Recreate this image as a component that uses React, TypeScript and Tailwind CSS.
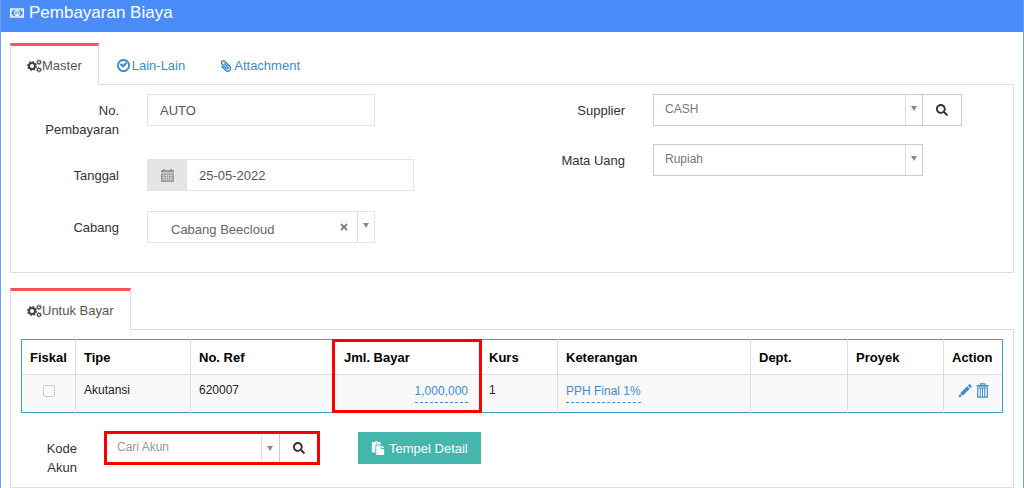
import { useState } from "react";
import type { ReactNode } from "react";
import { FaPaperclip, FaPaste, FaSearch, FaTimes } from "react-icons/fa";

function MoneyIcon() {
  return (
    <svg viewBox="0 0 15 10" className="h-[10px] w-[14px]" fill="none" stroke="currentColor" aria-hidden="true">
      <rect x="0.7" y="0.7" width="13.6" height="8.6" strokeWidth="1.4" />
      <path d="M1 3.2A2.2 2.2 0 0 0 3.200 1M11.800 1A2.200 2.200 0 0 0 14 3.200M14 6.800A2.200 2.200 0 0 0 11.800 9M3.200 9A2.200 2.200 0 0 0 1 6.800" />
      <ellipse cx="7.5" cy="5" rx="2.5" ry="3" strokeWidth="1.2" />
      <path d="M6.700 3.900l.9-.6v3.200M6.600 6.600h2" strokeWidth="0.9" />
    </svg>
  );
}

function CogsIcon() {
  return (
    <svg viewBox="0 0 15 14" className="h-[14px] w-[15px] text-[#444]" fill="none" stroke="currentColor" aria-hidden="true">
      <circle cx="5" cy="7" r="3" strokeWidth="2" />
      <circle cx="5" cy="7" r="4.300" strokeWidth="1.400" strokeDasharray="1.700 1.677" />
      <circle cx="12" cy="3.200" r="1.500" strokeWidth="1.100" />
      <circle cx="12" cy="3.200" r="2.300" strokeWidth="0.900" strokeDasharray="1 0.806" />
      <circle cx="12" cy="10.800" r="1.500" strokeWidth="1.100" />
      <circle cx="12" cy="10.800" r="2.300" strokeWidth="0.900" strokeDasharray="1 0.806" />
    </svg>
  );
}

function CheckCircleIcon() {
  return (
    <svg viewBox="0 128 1536 1536" className="size-[13px]" fill="currentColor" aria-hidden="true">
      <path d="M1171 723l-422 422q-19 19-45 19t-45-19l-294-294q-19-19-19-45t19-45l102-102q19-19 45-19t45 19l147 147 275-275q19-19 45-19t45 19l102 102q19 19 19 45t-19 45zm141 173q0-148-73-273t-198-198-273-73-273 73-198 198-73 273 73 273 198 198 273 73 273-73 198-198 73-273zm224 0q0 209-103 385.5t-279.5 279.5-385.5 103-385.5-103-279.5-279.5-103-385.5 103-385.5 279.5-279.5 385.5-103 385.5 103 279.5 279.5 103 385.5z" />
    </svg>
  );
}

function CalendarIcon() {
  return (
    <svg viewBox="0 0 13 13" className="size-[13px]" aria-hidden="true">
      <path fill="currentColor" d="M0 1h2V0h2v1h5V0h2v1h2v2.6H0zM0 4.4h13V13H0z" />
      <path stroke="#e5e5e5" strokeWidth="0.5" d="M1 6.5h11M1 8.6h11M1 10.7h11M3 5.4v6.8M5.3 5.4v6.8M7.7 5.4v6.8M10 5.4v6.8" />
    </svg>
  );
}

function PencilIcon() {
  return (
    <svg viewBox="0 0 14 14" className="size-[14px]" fill="currentColor" aria-hidden="true">
      <path d="M10.9.6a1 1 0 0 1 1.4 0l1.1 1.1a1 1 0 0 1 0 1.4l-1 1L9.9 1.6zM9.2 2.3l2.500 2.500-7 7-2.500-2.500zM1.700 10l2.300 2.300L.4 13.600z" />
    </svg>
  );
}

function TrashIcon() {
  return (
    <svg viewBox="0 0 13 15" className="h-[15px] w-[13px]" fill="none" stroke="currentColor" aria-hidden="true">
      <path strokeWidth="1.2" d="M4.3 2.2V.8h4.4v1.4" />
      <path strokeWidth="1.7" d="M.5 2.9h12" />
      <path strokeWidth="1.2" d="M1.7 5h9.6v9.2H1.7z" />
      <path strokeWidth="1" d="M4.3 5v9M6.5 5v9M8.7 5v9" />
    </svg>
  );
}

function Caret() {
  return (
    <span className="pointer-events-none absolute inset-y-px right-px flex w-[17px] justify-center border-l border-[#ddd] pt-[11px] text-[#888]">
      <svg viewBox="0 0 6 5" className="h-[5px] w-[6px]" fill="currentColor" aria-hidden="true"><path d="M0 0h6L3 5z" /></svg>
    </span>
  );
}

interface TabProps { icon: ReactNode; label: string; active?: boolean; onClick?: () => void; }

function Tab({ icon, label, active, onClick }: TabProps) {
  return (
    <button type="button" role="tab" aria-selected={!!active} onClick={onClick}
      className={active
        ? "flex h-[42px] items-center border-x border-t-3 border-x-[#ddd] border-t-[#f9535b] bg-white px-4 text-[#555]"
        : "flex h-[42px] items-center gap-[2px] border-x border-t-3 border-transparent px-4 text-[#428bca]"}>
      {icon}{label}
    </button>
  );
}

const columns: [string, string][] = [
  ["Fiskal", "w-[54px] px-2"],
  ["Tipe", "w-[115px] px-2"],
  ["No. Ref", "w-[142px] px-2"],
  ["Jml. Bayar", "w-[148px] px-[11px]"],
  ["Kurs", "w-[77px] px-2"],
  ["Keterangan", "px-2"],
  ["Dept.", "w-[97px] px-2"],
  ["Proyek", "w-[96px] px-2"],
  ["Action", "w-[59px] px-2"],
];

const rows = [
  { tipe: "Akutansi", ref: "620007", jumlah: "1,000,000", kurs: "1", keterangan: "PPH Final 1%", dept: "", proyek: "" },
];

export default function App() {
  const [tab, setTab] = useState("Master");

  return (
    <div className="border-x border-[#6ba1f7] bg-white font-['Liberation_Sans',Arial,sans-serif] text-[13px] leading-[19px] text-[#333]">

      {/* Title bar */}
      <header className="flex h-8 items-center gap-[5px] bg-[#4b8df8] px-[9px] pb-[7px] text-white">
        <MoneyIcon />
        <h1 className="text-[17px] leading-6">Pembayaran Biaya</h1>
      </header>

      <main className="flex flex-col gap-[15px] px-[9px] pt-[11px]">

        {/* Master */}
        <section>
          <div role="tablist" className="relative -mb-px flex gap-px">
            <Tab label="Master" active={tab === "Master"} onClick={() => setTab("Master")} icon={<CogsIcon />} />
            <Tab label="Lain-Lain" active={tab === "Lain-Lain"} onClick={() => setTab("Lain-Lain")} icon={<CheckCircleIcon />} />
            <Tab label="Attachment" active={tab === "Attachment"} onClick={() => setTab("Attachment")} icon={<FaPaperclip className="size-3 -scale-x-100" />} />
          </div>

          <div className="grid grid-cols-2 border border-[#ddd] pt-[9px] pb-[29px]">
            <div className="flex flex-col gap-5">
              <div className="flex gap-7">
                <label htmlFor="nomor" className="w-[108px] pt-[7px] pl-5 text-right">No. Pembayaran</label>
                <input id="nomor" defaultValue="AUTO" className="h-8 w-[228px] border border-[#e5e5e5] px-3 text-[#555]" />
              </div>
              <div className="flex gap-7">
                <label htmlFor="tanggal" className="w-[108px] pt-[7px] text-right">Tanggal</label>
                <div className="flex h-8 w-[267px] border border-[#e5e5e5]">
                  <button type="button" aria-label="Pilih tanggal" className="flex w-[39px] items-center justify-center bg-[#e5e5e5] text-[#999]"><CalendarIcon /></button>
                  <input id="tanggal" defaultValue="25-05-2022" className="min-w-0 flex-1 px-3 text-[#555]" />
                </div>
              </div>
              <div className="flex gap-7">
                <label htmlFor="cabang" className="w-[108px] pt-[7px] text-right">Cabang</label>
                <div className="relative w-[228px]">
                  <select id="cabang" className="h-8 w-full appearance-none border border-[#e5e5e5] bg-white pt-1 pl-[23px] text-[#666]">
                    <option>Cabang Beecloud</option>
                  </select>
                  <button type="button" aria-label="Hapus cabang" className="absolute top-[11px] right-[26px] text-[#777]"><FaTimes className="size-[10px]" /></button>
                  <Caret />
                </div>
              </div>
            </div>

            <div className="flex flex-col gap-[18px]">
              <div className="flex gap-7">
                <label htmlFor="supplier" className="w-[113px] pt-[7px] text-right">Supplier</label>
                <div className="flex">
                  <div className="relative w-[270px]">
                    <select id="supplier" className="h-8 w-full appearance-none border border-[#ccc] bg-white pb-0.5 pl-[11px] text-xs text-[#777]">
                      <option>CASH</option>
                    </select>
                    <Caret />
                  </div>
                  <button type="button" aria-label="Cari supplier" className="-ml-px flex h-8 w-10 items-center justify-center border border-[#ccc]"><FaSearch className="size-3" /></button>
                </div>
              </div>
              <div className="flex gap-7">
                <label htmlFor="uang" className="w-[113px] pt-[7px] text-right">Mata Uang</label>
                <div className="relative w-[270px]">
                  <select id="uang" className="h-8 w-full appearance-none border border-[#ccc] bg-white pb-0.5 pl-[11px] text-xs text-[#777]">
                    <option>Rupiah</option>
                  </select>
                  <Caret />
                </div>
              </div>
            </div>
          </div>
        </section>

        {/* Untuk Bayar */}
        <section>
          <div role="tablist" className="relative -mb-px flex">
            <Tab label="Untuk Bayar" active icon={<CogsIcon />} />
          </div>

          <div className="border border-[#ddd] px-[10px] pt-[9px] pb-[10px]">
            <table className="w-full table-fixed border-collapse border border-[#3a9fc9]">
              <thead>
                <tr className="h-[35px] text-black">
                  {columns.map(([name, cell]) => (
                    <th key={name} className={`${cell} relative border-x border-[#ddd] text-left font-bold first:border-l-[#3a9fc9] last:border-r-[#3a9fc9]`}>
                      {name}
                      {name === "Jml. Bayar" && <span className="pointer-events-none absolute -top-px -left-px h-[74px] w-[150px] border-3 border-[#f00]" />}
                    </th>
                  ))}
                </tr>
              </thead>
              <tbody className="text-xs leading-[19px]">
                {rows.map(r => (
                  <tr key={r.ref} className="h-[38px] border-t border-[#ddd] bg-[#f9f9f9] align-top text-[#222] *:border-x *:border-x-[#ddd] *:px-2 *:pt-[6px] *:first:border-l-[#3a9fc9] *:last:border-r-[#3a9fc9]">
                    <td className="text-center"><input type="checkbox" disabled aria-label="Fiskal" className="mt-1 size-3 appearance-none rounded-xs border border-[#ccc]" /></td>
                    <td>{r.tipe}</td>
                    <td>{r.ref}</td>
                    <td className="text-right"><a href="#jumlah" className="mr-1 inline-block border-b border-dashed border-[#428bca] py-px text-[#428bca]">{r.jumlah}</a></td>
                    <td>{r.kurs}</td>
                    <td><a href="#keterangan" className="inline-block border-b border-dashed border-[#428bca] py-px text-[#428bca]">{r.keterangan}</a></td>
                    <td>{r.dept}</td>
                    <td>{r.proyek}</td>
                    <td>
                      <div className="flex items-center justify-center gap-1 pt-0.5 text-[#428bca]">
                        <button type="button" aria-label="Ubah"><PencilIcon /></button>
                        <button type="button" aria-label="Hapus"><TrashIcon /></button>
                      </div>
                    </td>
                  </tr>
                ))}
              </tbody>
            </table>

            <div className="flex items-start pt-[18px]">
              <label htmlFor="akun" className="w-14 pt-2 pl-4 text-right">Kode Akun</label>
              <div className="ml-[27px] flex h-[34px] w-[216px] border-3 border-[#f00]">
                <div className="relative flex-1">
                  <select id="akun" className="h-full w-full appearance-none bg-white pb-0.5 pl-[10px] text-xs text-[#999]">
                    <option>Cari Akun</option>
                  </select>
                  <Caret />
                </div>
                <button type="button" aria-label="Cari akun" className="flex w-[38px] items-center justify-center border-l border-[#ccc]"><FaSearch className="size-3" /></button>
              </div>
              <button type="button" className="mt-px ml-[38px] flex h-8 items-center gap-1 bg-[#44b6ae] px-[13px] text-white">
                <FaPaste className="size-[14px]" />Tempel Detail
              </button>
            </div>
          </div>
        </section>
      </main>
    </div>
  );
}
